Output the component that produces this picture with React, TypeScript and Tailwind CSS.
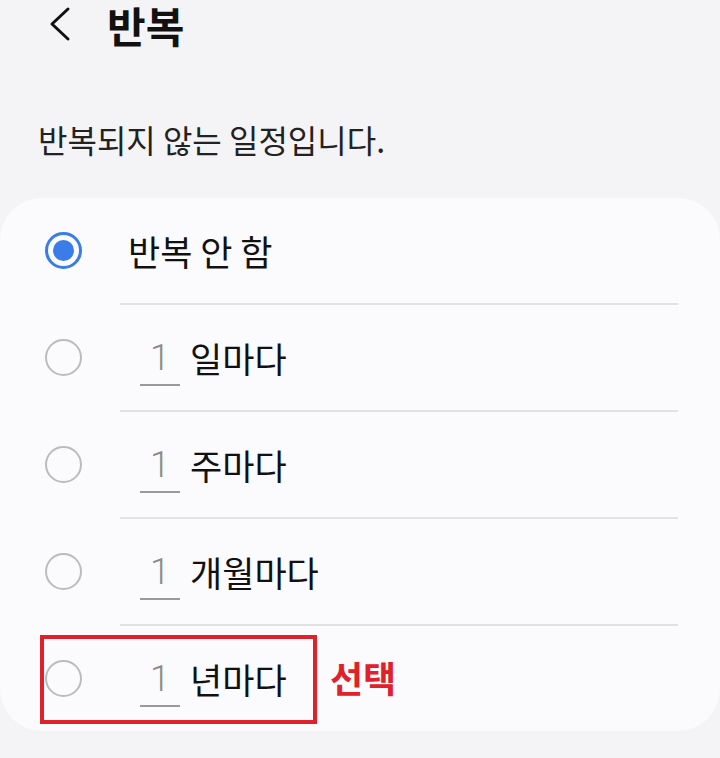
import React from "react";

const font = { fontFamily: '"Noto Sans CJK KR", "Noto Sans", sans-serif' };

type Option = { label: string; count?: boolean };

const options: Option[] = [
  { label: "반복 안 함" },
  { label: "일마다", count: true },
  { label: "주마다", count: true },
  { label: "개월마다", count: true },
  { label: "년마다", count: true },
];

const Radio = ({ checked }: { checked: boolean }) =>
  checked ? (
    <span className="flex h-[37px] w-[37px] items-center justify-center rounded-full border-[3px] border-[#3a7ce8]">
      <span className="h-[21px] w-[21px] rounded-full bg-[#3a7ce8]" />
    </span>
  ) : (
    <span className="h-[37px] w-[37px] rounded-full border-[2.5px] border-[#bcbcbc]" />
  );

const Row = ({ option, index, last }: { option: Option; index: number; last: boolean }) => (
  <div className="relative">
    <div className="flex h-[105px] items-center pl-[45px]">
      <Radio checked={index === 0} />
      {option.count ? (
        <div className="ml-[58px] flex items-center">
          <span
            className="relative flex w-[40px] justify-center text-[36px] font-light leading-none text-[#8a8a8a]"
            style={{ fontFamily: "Roboto, sans-serif" }}
          >
            1
            <span className="absolute -bottom-[10px] left-0 h-[2px] w-[40px] bg-[#9a9a9a]" />
          </span>
          <span className="ml-[10px] text-[35px] leading-none text-[#111]">{option.label}</span>
        </div>
      ) : (
        <span className="ml-[46px] text-[35px] leading-none text-[#111]">{option.label}</span>
      )}
    </div>
    {!last && <div className="ml-[120px] mr-[42px] h-[2px] bg-[#e2e2e4]" />}
    {last && (
      <>
        <div className="absolute left-[40px] top-[9px] h-[89px] w-[277px] border-[4px] border-[#e0202a]" />
        <span className="absolute left-[330px] top-[33px] text-[36px] font-bold leading-none text-[#e0202a]">
          선택
        </span>
      </>
    )}
  </div>
);

export default function App() {
  return (
    <main className="h-[758px] w-[720px] overflow-hidden bg-[#f4f4f6]" style={font}>
      <header className="flex h-[50px] items-center">
        <svg className="ml-[46px]" width="28" height="40" viewBox="0 0 28 40">
          <polyline
            points="22,4 6,19 22,34"
            fill="none"
            stroke="#111"
            strokeWidth="3"
            strokeLinecap="round"
            strokeLinejoin="round"
          />
        </svg>
        <h1 className="ml-[33px] text-[42px] font-bold leading-[50px] text-[#111]">반복</h1>
      </header>

      <p className="mt-[73px] pl-[38px] text-[32px] leading-none text-[#222]">반복되지 않는 일정입니다.</p>

      <section className="mt-[43px] w-[720px] rounded-[42px] bg-[#fbfbfd]">
        {options.map((o, i) => (
          <Row key={o.label} option={o} index={i} last={i === options.length - 1} />
        ))}
      </section>
    </main>
  );
}
